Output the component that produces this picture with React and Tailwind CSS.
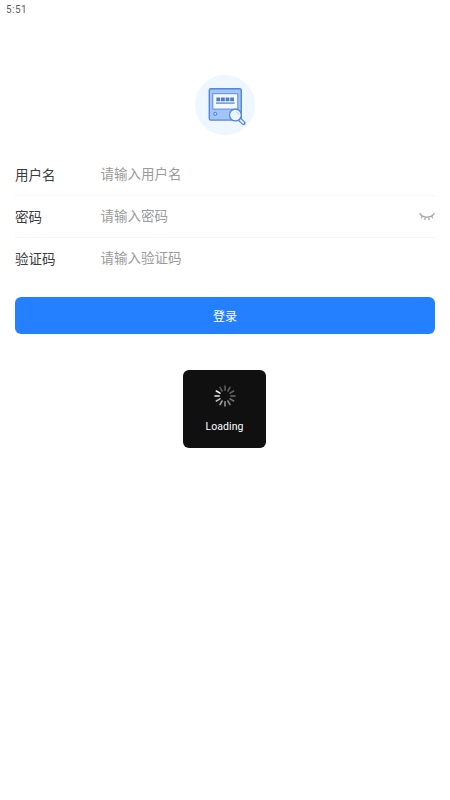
import React from "react";

const fields = [
  { label: "用户名", placeholder: "请输入用户名" },
  { label: "密码", placeholder: "请输入密码", secret: true },
  { label: "验证码", placeholder: "请输入验证码" },
];

const spokes = [0.32, 0.32, 0.35, 0.38, 0.42, 0.5, 0.55, 0.62, 0.72, 0.9, 0.95, 0.3];

function Logo() {
  return (
    <svg viewBox="0 0 60 60" className="size-[60px]">
      <circle cx="30" cy="30" r="30" fill="#eef7ff" />
      <rect x="14.3" y="13.7" width="32" height="31.4" rx="1.5" fill="#a3c4f7" stroke="#5486d8" strokeWidth="1.4" />
      <rect x="17.8" y="18.7" width="25" height="15.4" fill="#f3f9ff" stroke="#5b8dde" strokeWidth="1" />
      <g fill="#4d7fd0">
        <rect x="21.4" y="22.5" width="3.8" height="3.8" />
        <rect x="26" y="22.5" width="3.8" height="3.8" />
        <rect x="30.6" y="22.5" width="3.8" height="3.8" />
        <rect x="35.2" y="22.5" width="3.8" height="3.8" />
        <rect x="21" y="27.5" width="18.6" height="1.2" />
      </g>
      <circle cx="20.2" cy="38.9" r="1.6" fill="#b9d4fc" stroke="#4c81d4" />
      <path d="m44.7 44.4 3.8 3.6" stroke="#5486d8" strokeWidth="4.2" strokeLinecap="round" />
      <path d="m45.4 45.1 2.8 2.7" stroke="#e3efff" strokeWidth="1.9" strokeLinecap="round" />
      <circle cx="40.4" cy="40" r="5.9" fill="#edf6ff" stroke="#5486d8" strokeWidth="1.3" />
      <path d="M41.2 37a3.4 3.4 0 0 1 2.5 2.8" fill="none" stroke="#a9c8f5" strokeWidth=".9" />
    </svg>
  );
}

function ClosedEye() {
  return (
    <svg viewBox="0 0 16 10" className="h-[10px] w-4" fill="none" stroke="#a3a4a6" strokeWidth="1.3" strokeLinecap="round">
      <path d="M1 1.6C4.2 6.3 11.8 6.3 15 1.6M3.5 4 2.5 5.8M6.4 5.3 5.9 7.6M9.6 5.3l.5 2.3M12.5 4l1 1.8" />
    </svg>
  );
}

function Spinner() {
  return (
    <svg viewBox="-12 -12 24 24" className="size-6" stroke="#fff" strokeWidth="1.6" strokeLinecap="round">
      {spokes.map((opacity, i) => (
        <path key={i} d="M0-5.8V-10" opacity={opacity} transform={`rotate(${i * 30})`} />
      ))}
    </svg>
  );
}

export default function App() {
  return (
    <div className="relative h-[800px] w-[450px] overflow-hidden bg-white font-['Roboto','Noto_Sans_CJK_SC',sans-serif]">
      <header className="flex h-5 items-center pb-[2px] pl-[6px] text-[10px] tracking-[0.45px] text-[#606060]">5:51</header>
      <main className="px-[15px]">
        <div className="flex justify-center pt-[55px]">
          <Logo />
        </div>
        <form className="pt-[19px]">
          {fields.map((f, i) => (
            <div
              key={f.label}
              className={`flex h-[42px] items-center border-b text-[13.5px] ${i < 2 ? "border-[#f5f6f7]" : "border-transparent"}`}
            >
              <span className="w-[85.5px] pt-px text-[#3c3c3e]">{f.label}</span>
              <span className="flex-1 pb-px text-[#9b9b9b]">{f.placeholder}</span>
              {f.secret && <ClosedEye />}
            </div>
          ))}
          <button
            type="button"
            className="mt-[17px] flex h-[36.5px] w-full items-center justify-center rounded-[6px] bg-[#2580ff] pt-[3px] text-[12px] text-white"
          >
            登录
          </button>
        </form>
      </main>
      <div className="absolute top-[370px] left-[183px] flex h-[78px] w-[83px] flex-col items-center rounded-[6px] bg-[#101010] pt-[14px] text-[10.5px] text-white">
        <Spinner />
        <span className="mt-[11px] leading-4 tracking-[0.1px]">Loading</span>
      </div>
    </div>
  );
}
